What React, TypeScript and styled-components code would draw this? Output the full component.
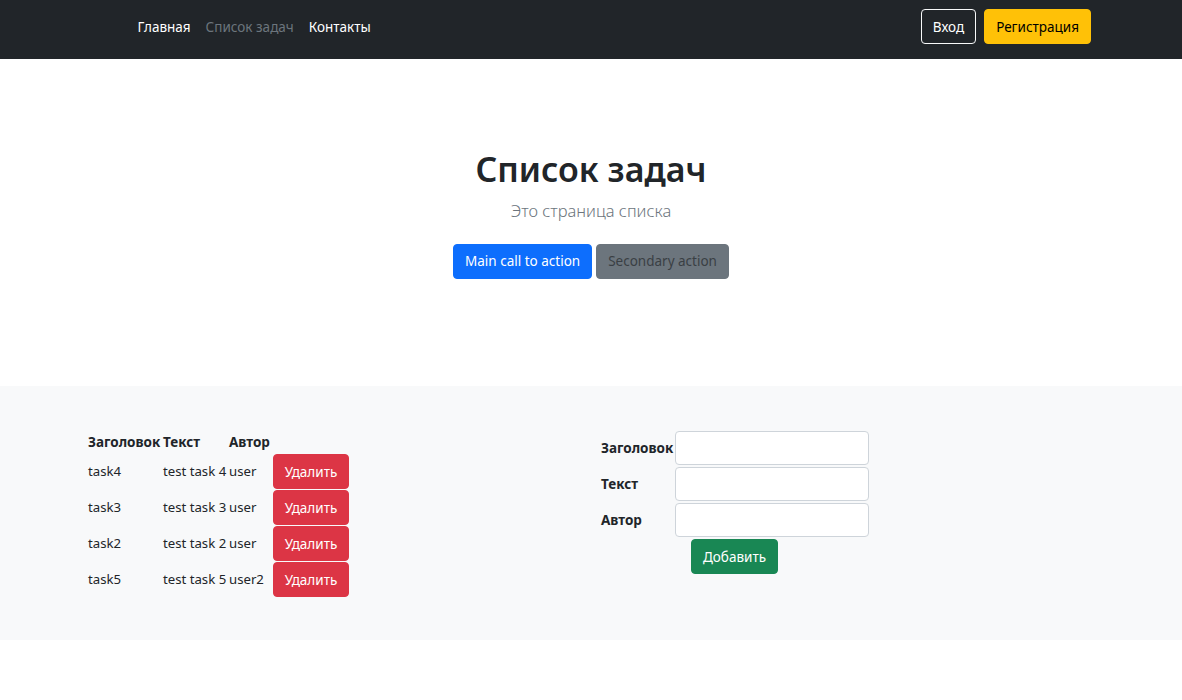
import React from "react";
import styled, { createGlobalStyle } from "styled-components";

const GlobalStyle = createGlobalStyle`
  body {
    margin: 0;
    font-family: "Noto Sans", "Open Sans", sans-serif;
    font-size: 13.5px;
    color: #212529;
    background: #fff;
  }
  * { box-sizing: border-box; }
`;

const Header = styled.header`
  background: #212529;
  height: 59px;
  display: flex;
  align-items: center;
  justify-content: space-between;
  padding: 0 91px 6px 130px;
`;

const NavList = styled.nav`
  display: flex;
  align-items: center;
`;

const NavLink = styled.a<{ $muted?: boolean }>`
  padding: 0 7.5px;
  font-size: 13.5px;
  color: ${p => (p.$muted ? "#6c757d" : "#fff")};
  text-decoration: none;
  font-weight: 400;
`;

const AuthGroup = styled.div`
  display: flex;
  gap: 8px;
`;

const Button = styled.button<{ $variant: string }>`
  font-family: inherit;
  font-size: 13.5px;
  height: 35px;
  padding: 0 11px;
  border-radius: 4px;
  border: 1px solid transparent;
  cursor: pointer;
  ${p =>
    ({
      outline: "background: transparent; color: #fff; border-color: #f8f9fa;",
      warning: "background: #ffc107; color: #000; border-color: #ffc107;",
      primary: "background: #0d6efd; color: #fff; border-color: #0d6efd;",
      secondary: "background: #6c757d; color: #3a3f44; border-color: #6c757d;",
      danger: "background: #dc3545; color: #fff; border-color: #dc3545;",
      success: "background: #198754; color: #fff; border-color: #198754;"
    } as Record<string, string>)[p.$variant]}
`;

const Hero = styled.section`
  height: 327px;
  display: flex;
  flex-direction: column;
  align-items: center;
  padding-top: 90px;
`;

const Title = styled.h1`
  margin: 0;
  font-size: 34px;
  font-weight: 600;
  line-height: 1.2;
  color: #212529;
`;

const Lead = styled.p`
  margin: 9px 0 0;
  font-size: 16.5px;
  font-weight: 300;
  color: #6c757d;
`;

const HeroActions = styled.div`
  display: flex;
  gap: 4px;
  margin-top: 22px;
`;

const TasksSection = styled.section`
  background: #f8f9fa;
  height: 254px;
  display: flex;
  align-items: flex-start;
  padding: 45px 0 0 88px;
`;

const TaskTable = styled.table`
  border-collapse: collapse;
  table-layout: fixed;
  th,
  td {
    padding: 0;
    text-align: left;
    font-size: 13.2px;
    vertical-align: middle;
    white-space: nowrap;
  }
  th {
    font-weight: 700;
    font-size: 13.5px;
    height: 22px;
  }
  td {
    height: 36px;
  }
`;

const Col = styled.col<{ $w: number }>`
  width: ${p => p.$w}px;
`;

const DeleteCell = styled.td`
  padding-top: 1px !important;
`;

const DeleteButton = styled(Button)`
  width: 76px;
  padding: 0;
`;

const TaskForm = styled.form`
  margin-left: 252px;
  display: grid;
  grid-template-columns: 74px 194px;
  row-gap: 2px;
  align-items: center;
`;

const Label = styled.label`
  font-weight: 700;
  font-size: 13.5px;
`;

const Input = styled.input`
  height: 34px;
  border: 1px solid #ced4da;
  border-radius: 4px;
  background: #fff;
  font-family: inherit;
`;

const SubmitRow = styled.div`
  grid-column: 1 / 3;
  padding-left: 90px;
`;

const tasks = [
  { title: "task4", text: "test task 4", author: "user" },
  { title: "task3", text: "test task 3", author: "user" },
  { title: "task2", text: "test task 2", author: "user" },
  { title: "task5", text: "test task 5", author: "user2" }
];

export default function App() {
  return (
    <>
      <GlobalStyle />
      <Header>
        <NavList>
          <NavLink href="#">Главная</NavLink>
          <NavLink href="#" $muted>
            Список задач
          </NavLink>
          <NavLink href="#">Контакты</NavLink>
        </NavList>
        <AuthGroup>
          <Button $variant="outline">Вход</Button>
          <Button $variant="warning">Регистрация</Button>
        </AuthGroup>
      </Header>
      <Hero>
        <Title>Список задач</Title>
        <Lead>Это страница списка</Lead>
        <HeroActions>
          <Button $variant="primary">Main call to action</Button>
          <Button $variant="secondary">Secondary action</Button>
        </HeroActions>
      </Hero>
      <TasksSection>
        <TaskTable>
          <colgroup>
            <Col $w={75} />
            <Col $w={66} />
            <Col $w={44} />
            <Col $w={76} />
          </colgroup>
          <thead>
            <tr>
              <th>Заголовок</th>
              <th>Текст</th>
              <th>Автор</th>
              <th />
            </tr>
          </thead>
          <tbody>
            {tasks.map(task => (
              <tr key={task.title}>
                <td>{task.title}</td>
                <td>{task.text}</td>
                <td>{task.author}</td>
                <DeleteCell>
                  <DeleteButton $variant="danger" type="button">
                    Удалить
                  </DeleteButton>
                </DeleteCell>
              </tr>
            ))}
          </tbody>
        </TaskTable>
        <TaskForm onSubmit={e => e.preventDefault()}>
          <Label>Заголовок</Label>
          <Input />
          <Label>Текст</Label>
          <Input />
          <Label>Автор</Label>
          <Input />
          <SubmitRow>
            <Button $variant="success" type="submit">
              Добавить
            </Button>
          </SubmitRow>
        </TaskForm>
      </TasksSection>
    </>
  );
}
